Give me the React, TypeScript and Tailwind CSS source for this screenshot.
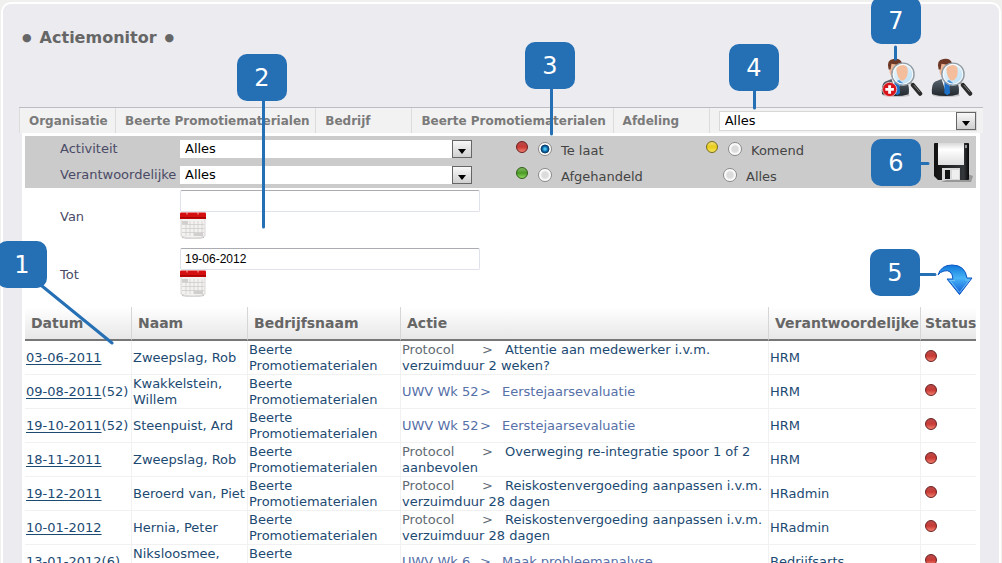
import type { ReactNode } from "react";

type Action = {
  date: string;
  suffix?: string;
  name: string;
  kind: "protocol" | "uwv";
  source: string;
  action: string;
  owner: string;
};

const COMPANY = "Beerte Promotiematerialen";

const actions: Action[] = [
  { date: "03-06-2011", name: "Zweepslag, Rob", kind: "protocol", source: "Protocol", action: "Attentie aan medewerker i.v.m. verzuimduur 2 weken?", owner: "HRM" },
  { date: "09-08-2011", suffix: "(52)", name: "Kwakkelstein, Willem", kind: "uwv", source: "UWV Wk 52", action: "Eerstejaarsevaluatie", owner: "HRM" },
  { date: "19-10-2011", suffix: "(52)", name: "Steenpuist, Ard", kind: "uwv", source: "UWV Wk 52", action: "Eerstejaarsevaluatie", owner: "HRM" },
  { date: "18-11-2011", name: "Zweepslag, Rob", kind: "protocol", source: "Protocol", action: "Overweging re-integratie spoor 1 of 2 aanbevolen", owner: "HRM" },
  { date: "19-12-2011", name: "Beroerd van, Piet", kind: "protocol", source: "Protocol", action: "Reiskostenvergoeding aanpassen i.v.m. verzuimduur 28 dagen", owner: "HRadmin" },
  { date: "10-01-2012", name: "Hernia, Peter", kind: "protocol", source: "Protocol", action: "Reiskostenvergoeding aanpassen i.v.m. verzuimduur 28 dagen", owner: "HRadmin" },
  { date: "13-01-2012", suffix: "(6)", name: "Niksloosmee, Karel", kind: "uwv", source: "UWV Wk 6", action: "Maak probleemanalyse", owner: "Bedrijfsarts" },
];

function Ball({ color }: { color: "red" | "green" | "yellow" }) {
  const fills = {
    red: "border-[#6b1c1c] bg-[linear-gradient(#b84a4a,#c93a34_50%,#f08070)]",
    green: "border-[#2c5c14] bg-[linear-gradient(#7fb860,#4a9a24_50%,#8fd860)]",
    yellow: "border-[#7a6a14] bg-[linear-gradient(#f0e070,#e8cc18_50%,#f6e860)]",
  };
  return <span className={`inline-block size-3 shrink-0 rounded-full border ${fills[color]}`} />;
}

function Dropdown({ id, label }: { id: string; label: string }) {
  return (
    <div className="relative w-full">
      <select
        id={id}
        aria-label={label}
        className="block h-[18px] w-full appearance-none bg-white pl-[5px] text-[13px] leading-[18px] text-black"
      >
        <option>Alles</option>
      </select>
      <span className="pointer-events-none absolute inset-y-0 right-0 flex w-5 items-end justify-center border border-[#666] bg-linear-to-b from-[#f8f8f8] to-[#cfcfcf] pb-[3px]">
        <svg viewBox="0 0 8 5" className="h-[5px] w-2">
          <path d="M0 0h8L4 5z" fill="#000" />
        </svg>
      </span>
    </div>
  );
}

function StatusOption({ label, value, ball, checked }: { label: string; value: string; ball?: ReactNode; checked?: boolean }) {
  return (
    <div className={ball ? "flex items-center pl-11" : "flex items-center pl-[61px]"}>
      {ball && <span className="mr-2.5 flex pb-1">{ball}</span>}
      <input
        type="radio"
        id={value}
        name="status"
        defaultChecked={checked}
        className="size-3.5 shrink-0 appearance-none rounded-full border border-[#8a8a8a] bg-[radial-gradient(circle,#dcdcdc_35%,#fff_60%)] checked:bg-[radial-gradient(circle,#4cc0f0_12%,#0b6aa8_30%,#0b3560_48%,#fff_56%)]"
      />
      <label htmlFor={value} className="pt-1 pl-[9px] text-[#444]">
        {label}
      </label>
    </div>
  );
}

function Calendar() {
  return (
    <svg viewBox="0 0 26 27" className="h-[27px] w-[26px]">
      <path d="M2 25q11 3 22 0v1q-11 2-22 0z" fill="#bbb" />
      <path d="M1 5h24v19q-4 2-12 2T1 24z" fill="#f4f2f1" stroke="#d0cdcc" strokeWidth=".8" />
      <path d="M2 9h6v3H2zM14 21h9v3h-9z" fill="#d2d0cf" />
      <path d="M2 12.5h22M2 16.5h22M2 20.5h22M6 9v15M10 9v15M14 9v15M18 9v15M22 9v15" stroke="#cbc8c8" strokeWidth=".7" />
      <path d="M0 1.500q0-1 1-1h24q1 0 1 1V7H0z" fill="#d50f0f" />
      <path d="M0 5h26v1.500H0z" fill="#a80505" />
      <path d="M7 .5v2M18 .5v2" stroke="#fff" strokeOpacity=".7" />
    </svg>
  );
}

function PersonSearch({ plus }: { plus?: boolean }) {
  return (
    <svg viewBox="0 0 44 42" className="h-10 w-[42px]">
      <defs>
        <linearGradient id="suit" x1="0" y1="0" x2="0" y2="1">
          <stop offset="0" stopColor="#5b6670" />
          <stop offset="1" stopColor="#20262c" />
        </linearGradient>
        <linearGradient id="lens" x1="0" y1="0" x2="1" y2="1">
          <stop offset="0" stopColor="#f2fafe" />
          <stop offset="1" stopColor="#b4dcf5" />
        </linearGradient>
      </defs>
      <ellipse cx="16" cy="39" rx="14" ry="2" fill="#aaa" opacity=".6" />
      <path d="M1 38q-1-10 3-13l7-3 9 1 8 4q2 4 1 11-13 4-28 0z" fill="url(#suit)" />
      <path d="M11 22l5 15 6-14z" fill="#f3f6f8" />
      <path d="M14 25l2-2 3 2 1 12-3 2-3-2z" fill="#1d70c8" />
      <path d="M9 8q0-5 6-5t6 5v7q-2 7-6 7t-6-7z" fill="#eeb695" />
      <path d="M8 12Q5 2 13 1q8-1 9 5l-5 1-6-1-1 6z" fill="#6e3826" />
      <circle cx="23" cy="17" r="11.5" fill="url(#lens)" stroke="#929da5" strokeWidth="1.800" />
      <path d="M16 12q1-6 8-5 5 2 4 9-1 7-6 8-5-2-6-12z" fill="#f4bd9c" />
      <path d="M15 25l4-2 5 4-3 1z" fill="#4a94dc" />
      <circle cx="23" cy="17" r="10.3" fill="none" stroke="#f7fafb" strokeWidth="1.200" />
      <path d="M31 26l3 3" stroke="#999" strokeWidth="2" />
      <path d="M33.500 28.500l7.500 9" stroke="#2b2b2b" strokeWidth="4.500" strokeLinecap="round" />
      <path d="M34.500 28.500l6 7" stroke="#888" strokeWidth="1" />
      {plus && (
        <g>
          <circle cx="9" cy="33" r="7.500" fill="#d8131c" stroke="#f6dada" strokeWidth=".8" />
          <path d="M9 28.500v9M4.500 33h9" stroke="#fff" strokeWidth="3" />
        </g>
      )}
    </svg>
  );
}

function Floppy() {
  return (
    <svg viewBox="0 0 40 42" className="h-[42px] w-10">
      <defs>
        <linearGradient id="disk" x1="0" y1="0" x2="1" y2="0">
          <stop offset="0" stopColor="#111" />
          <stop offset=".85" stopColor="#34373a" />
          <stop offset="1" stopColor="#08090a" />
        </linearGradient>
        <linearGradient id="paper" x1="0" y1="0" x2="0" y2="1">
          <stop offset="0" stopColor="#d9d9d9" />
          <stop offset=".3" stopColor="#fff" />
          <stop offset="1" stopColor="#dedede" />
        </linearGradient>
      </defs>
      <path d="M8 41h30l2-6-8-3z" fill="#777" opacity=".6" />
      <path d="M1 3q0-1 1-1h33q1 0 1 1v35q0 1-1 1H5l-4-4z" fill="url(#disk)" />
      <path d="M5 2h26v22H5z" fill="url(#paper)" />
      <path d="M9 27h18v12H9z" fill="#d8d8d8" />
      <path d="M12 29h5v9h-5z" fill="#101112" />
      <path d="M19 29h7v9h-7z" fill="#efefef" />
      <path d="M32 4h2v3h-2z" fill="#999" />
    </svg>
  );
}

function DownArrow() {
  return (
    <svg viewBox="0 0 36 32" className="h-8 w-9">
      <defs>
        <linearGradient id="arrow" x1="0" y1="0" x2="0" y2="1">
          <stop offset="0" stopColor="#0f76d8" />
          <stop offset=".45" stopColor="#48b4f6" />
          <stop offset="1" stopColor="#0c58d4" />
        </linearGradient>
      </defs>
      <path
        d="M1 11Q4 1 15 1q13 0 15 13h5L22.500 30.500 10 15h6Q15 5 7 7 3 8 1 11z"
        fill="url(#arrow)"
        stroke="#0b55c4"
        strokeLinejoin="round"
      />
      <path d="M12.500 16.500H18M28 16h4.500l-10 12.500-9-11.500" fill="none" stroke="#7cc8fa" strokeWidth=".8" />
    </svg>
  );
}

function Callout({ n, className }: { n: number; className: string }) {
  return (
    <span
      className={`absolute flex h-[47px] w-[50px] items-center justify-center rounded-[10px] bg-[#256fb5] text-2xl text-white ${className}`}
    >
      {n}
    </span>
  );
}

// Numbered explanation markers, drawn over the screen they point at.
function Callouts() {
  return (
    <div className="pointer-events-none absolute inset-0">
      <svg className="absolute inset-0 h-full w-full" stroke="#256fb5" strokeWidth="3" strokeLinecap="round">
        <path d="M42 286L112 343M263.500 100V227M551.500 88V134M754.500 90V108M920 274.500H935M920 163.500H928M895.500 47V59" />
      </svg>
      <Callout n={1} className="-left-[3px] top-[241px]" />
      <Callout n={2} className="left-[237px] top-[54px]" />
      <Callout n={3} className="left-[525px] top-[42px]" />
      <Callout n={4} className="left-[729px] top-11" />
      <Callout n={5} className="left-[870px] top-[249px]" />
      <Callout n={6} className="left-[871px] top-[139px]" />
      <Callout n={7} className="left-[871px] -top-[3px]" />
    </div>
  );
}

function DateField({ id, label, value }: { id: string; label: string; value: string }) {
  return (
    <div className="flex h-[58px] items-center">
      <label htmlFor={id} className="w-[155px] shrink-0 pl-[35px]">
        {label}
      </label>
      <div className="w-[300px] self-start pt-0.5">
        <input
          id={id}
          type="text"
          defaultValue={value}
          className="block h-[22px] w-full rounded-xs border border-[#dfe2ea] border-t-[#aaabb3] bg-white px-1 font-['Liberation_Sans',sans-serif] text-xs text-black"
        />
        <button type="button" aria-label={`Kalender ${label}`} className="block">
          <Calendar />
        </button>
      </div>
    </div>
  );
}

function Tabs() {
  const tabs = ["Organisatie", COMPANY, "Bedrijf", COMPANY, "Afdeling"];
  return (
    <div className="grid h-[26px] grid-cols-[96fr_200fr_96fr_201fr_96fr_274fr] items-stretch border-t border-[#bcbcc4] bg-[#f2f2f2] text-xs font-bold text-[#7a7a7a]">
      {tabs.map((tab, i) => (
        <div key={i} className="flex items-center border-l border-[#dcdcdc] pl-[9px] whitespace-nowrap">
          {tab}
        </div>
      ))}
      <div className="flex items-center border-l border-[#dcdcdc] pr-1.5 pl-[9px] font-normal">
        <div className="w-full border border-[#d8d8d8]">
          <Dropdown id="afdeling" label="Afdeling" />
        </div>
      </div>
    </div>
  );
}

function Filters() {
  return (
    <form>
      <div className="flex items-center justify-between bg-[#cbcbcb]">
        <div className="grid grid-cols-[155px_292px_190px_auto] auto-rows-[26px] items-center">
          <label htmlFor="activiteit" className="pl-[35px]">Activiteit</label>
          <Dropdown id="activiteit" label="Activiteit" />
          <StatusOption label="Te laat" value="te-laat" ball={<Ball color="red" />} checked />
          <StatusOption label="Komend" value="komend" ball={<Ball color="yellow" />} />
          <label htmlFor="verantwoordelijke" className="pl-[35px]">Verantwoordelijke</label>
          <Dropdown id="verantwoordelijke" label="Verantwoordelijke" />
          <StatusOption label="Afgehandeld" value="afgehandeld" ball={<Ball color="green" />} />
          <StatusOption label="Alles" value="alles" />
        </div>
        <button type="button" aria-label="Opslaan" className="mr-[3px]">
          <Floppy />
        </button>
      </div>
      <div className="flex items-end justify-between">
        <div>
          <DateField id="van" label="Van" value="" />
          <DateField id="tot" label="Tot" value="19-06-2012" />
        </div>
        <button type="button" aria-label="Zoeken" className="mr-[3px] mb-2">
          <DownArrow />
        </button>
      </div>
    </form>
  );
}

function ActionTable() {
  const headers = ["Datum", "Naam", "Bedrijfsnaam", "Actie", "Verantwoordelijke", "Status"];
  return (
    <table className="w-full table-fixed border-separate border-spacing-0 text-left text-[#1c4a72]">
      <colgroup>
        <col className="w-[106px]" />
        <col className="w-[116px]" />
        <col className="w-[153px]" />
        <col />
        <col className="w-[152px]" />
        <col className="w-14" />
      </colgroup>
      <thead>
        <tr className="bg-linear-to-b from-white to-[#e6e6e6] text-sm text-[#666]">
          {headers.map((header) => (
            <th
              key={header}
              scope="col"
              className="h-[34px] border-b-2 border-l border-b-[#777] border-l-[#d6d6d6] pl-[6px] whitespace-nowrap first:border-l-0 last:pl-1"
            >
              {header}
            </th>
          ))}
        </tr>
      </thead>
      <tbody className="[&_td]:h-[34px] [&_td]:border-b [&_td]:border-l [&_td]:border-[#f1f1f1] [&_td]:pl-px [&_td:first-child]:border-l-0">
        {actions.map((row) => (
          <tr key={row.date}>
            <td className="whitespace-nowrap">
              <a href="#" className="underline underline-offset-2">{row.date}</a>
              {row.suffix}
            </td>
            <td>{row.name}</td>
            <td>{COMPANY}</td>
            {row.kind === "uwv" ? (
              <td className="text-[#5670a8]">
                <span className="inline-block w-[78px]">{row.source}</span>
                <span className="inline-block w-[22px]">&gt;</span>
                {row.action}
              </td>
            ) : (
              <td>
                <span className="inline-block w-20 text-[#5f6b74]">{row.source}</span>
                <span className="inline-block w-[23px] text-[#5f6b74]">&gt;</span>
                {row.action}
              </td>
            )}
            <td>{row.owner}</td>
            <td>
              <span className="flex pb-1 pl-[3px]">
                <Ball color="red" />
              </span>
            </td>
          </tr>
        ))}
      </tbody>
    </table>
  );
}

export default function App() {
  return (
    <div className="relative h-screen overflow-hidden bg-[#f0f0ee] px-px pt-0.5 font-['DejaVu_Sans',Verdana,sans-serif] text-[13px] leading-4 text-[#4a4a66]">
      <main className="min-h-full rounded-t-[10px] border-2 border-b-0 border-white bg-[#ebebf0] px-4">
        <header className="flex h-[103px] items-start justify-between">
          <h1 className="flex items-center gap-2 pt-[22px] pl-[3px] text-base leading-6 font-bold text-[#666]">
            <span className="text-[11px]">●</span>
            Actiemonitor
            <span className="text-[11px]">●</span>
          </h1>
          <div className="flex gap-2 pt-[54px] pr-2.5">
            <button type="button" aria-label="Medewerker toevoegen">
              <PersonSearch plus />
            </button>
            <button type="button" aria-label="Medewerker zoeken">
              <PersonSearch />
            </button>
          </div>
        </header>
        <Tabs />
        <section className="mx-[3px] bg-white pt-[3px] pr-1 pl-[3px]">
          <Filters />
          <div className="pt-[3px]">
            <ActionTable />
          </div>
        </section>
      </main>
      <Callouts />
    </div>
  );
}
